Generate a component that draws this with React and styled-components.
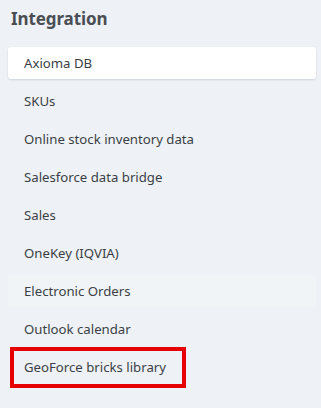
import React from "react";
import styled, { createGlobalStyle } from "styled-components";

const Global = createGlobalStyle`
  html, body { margin: 0; padding: 0; background: #eef2f6; }
  body { font-family: "Noto Sans", Inter, "Liberation Sans", sans-serif; }
`;

const Panel = styled.div`
  width: 321px;
  height: 408px;
  box-sizing: border-box;
  padding: 6px 5px 0 8px;
  background: #eef2f6;
`;

const Title = styled.h2`
  margin: 0 0 0 3px;
  height: 27px;
  line-height: 25px;
  font-size: 17px;
  font-weight: 700;
  color: #4a4e54;
  letter-spacing: -0.1px;
`;

const List = styled.ul`
  list-style: none;
  margin: 14px 0 0 0;
  padding: 0;
  display: flex;
  flex-direction: column;
  gap: 6px;
`;

const Item = styled.li`
  position: relative;
  height: 32px;
  display: flex;
  align-items: center;
  padding-left: 16px;
  border-radius: 3px;
  font-size: 13.2px;
  color: #3b3f45;
  background: ${(p) => (p.$active ? "#ffffff" : p.$hover ? "#f1f4f7" : "transparent")};
  box-shadow: ${(p) => (p.$active ? "0 1px 2px rgba(60, 80, 110, 0.18)" : "none")};
`;

const Highlight = styled.span`
  position: absolute;
  left: 2px;
  top: -4px;
  width: 176px;
  height: 41px;
  box-sizing: border-box;
  border: 4px solid #e60000;
  pointer-events: none;
`;

const items = [
  "Axioma DB",
  "SKUs",
  "Online stock inventory data",
  "Salesforce data bridge",
  "Sales",
  "OneKey (IQVIA)",
  "Electronic Orders",
  "Outlook calendar",
  "GeoForce bricks library",
];

export default function App() {
  return (
    <>
      <Global />
      <Panel>
        <Title>Integration</Title>
        <List>
          {items.map((t, i) => (
            <Item key={t} $active={i === 0} $hover={i === 6}>
              {t}
              {i === 8 && <Highlight />}
            </Item>
          ))}
        </List>
      </Panel>
    </>
  );
}
